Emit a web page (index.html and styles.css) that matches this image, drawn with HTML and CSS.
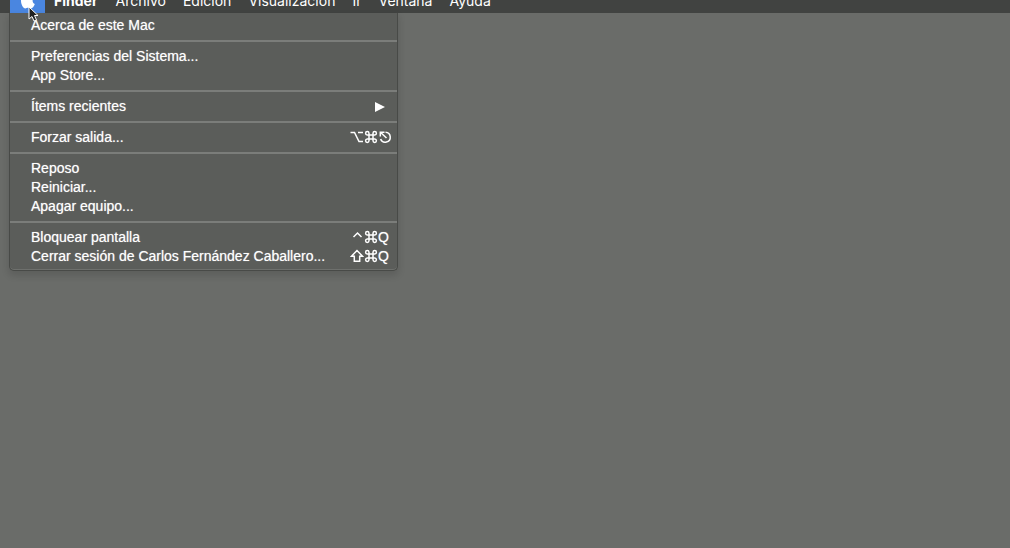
FILE: index.html
```html
<!DOCTYPE html>
<html lang="es">
<head>
<meta charset="utf-8">
<title>Finder</title>
<link rel="stylesheet" href="styles.css">
</head>
<body class="desktop">
<svg class="symbols" aria-hidden="true">
  <symbol id="cmd" viewBox="0 0 14 14"><path d="M5 5h4v4H5zM5 5H3.200A1.700 1.700 0 1 1 5 3.200zM9 5V3.200A1.700 1.700 0 1 1 10.800 5zM9 9h1.800A1.700 1.700 0 1 1 9 10.800zM5 9v1.800A1.700 1.700 0 1 1 3.200 9z"/></symbol>
  <symbol id="option" viewBox="0 0 14 14"><path d="M0.500 2.500H4.500l4.500 9H13M8 2.500H13"/></symbol>
  <symbol id="power" viewBox="0 0 14 14"><path d="M7.500 2.200A5 5 0 1 1 2.600 9M8.500 8L3 2.800M2.300 6.500V2.300H6.500"/></symbol>
  <symbol id="control" viewBox="0 0 14 14"><path d="M3.500 7L7.500 3l4 4"/></symbol>
  <symbol id="shift" viewBox="0 0 14 14"><path d="M7 1.500L1.500 7.200h2.800v5h5.400v-5h2.800z"/></symbol>
</svg>
<nav class="menubar" aria-label="Barra de menús">
  <button class="bar-item apple" aria-label="Apple"><svg class="apple-icon" viewBox="0 0 16 18"><path d="M11.200 4.500c-1.400 0-2.200.8-3.200.8s-2-.8-3.300-.8C2.600 4.500 1 6.500 1 9.700c0 3.700 2.200 7.800 4.300 7.800 1 0 1.600-.7 2.800-.7s1.700.7 2.800.7c1.700 0 3.300-2.600 3.900-4.500-1.400-.6-2.200-1.800-2.200-3.300 0-1.400.7-2.500 1.900-3.200-.8-1.300-2-2-3.300-2zM8 4.300C8 2 9.500.5 11.300.2 11.500 2.400 9.900 4.200 8 4.300z"/></svg></button>
  <button class="bar-item app-name">Finder</button>
  <button class="bar-item">Archivo</button>
  <button class="bar-item">Edición</button>
  <button class="bar-item">Visualización</button>
  <button class="bar-item">Ir</button>
  <button class="bar-item">Ventana</button>
  <button class="bar-item">Ayuda</button>
</nav>
<main class="workspace">
  <div class="menu" role="menu">
    <div class="group"><button class="item" role="menuitem">Acerca de este Mac</button></div>
    <div class="group">
      <button class="item" role="menuitem">Preferencias del Sistema...</button>
      <button class="item" role="menuitem">App Store...</button>
    </div>
    <div class="group"><button class="item" role="menuitem">Ítems recientes <svg class="arrow" viewBox="0 0 10 10"><path d="M0 0l10 5-10 5z"/></svg></button></div>
    <div class="group"><button class="item" role="menuitem">Forzar salida... <span class="keys wide"><svg class="key"><use href="#option"/></svg><svg class="key"><use href="#cmd"/></svg><svg class="key"><use href="#power"/></svg></span></button></div>
    <div class="group">
      <button class="item" role="menuitem">Reposo</button>
      <button class="item" role="menuitem">Reiniciar...</button>
      <button class="item" role="menuitem">Apagar equipo...</button>
    </div>
    <div class="group">
      <button class="item" role="menuitem">Bloquear pantalla <span class="keys"><svg class="key"><use href="#control"/></svg><svg class="key"><use href="#cmd"/></svg><span class="letter">Q</span></span></button>
      <button class="item" role="menuitem">Cerrar sesión de Carlos Fernández Caballero... <span class="keys"><svg class="key"><use href="#shift"/></svg><svg class="key"><use href="#cmd"/></svg><span class="letter">Q</span></span></button>
    </div>
  </div>
</main>
<svg class="cursor" viewBox="0 0 12 18" aria-hidden="true"><path d="M1 1v12l3-2.500 2 4.500 2.500-1-2-4.500H10z"/></svg>
</body>
</html>
```
FILE: styles.css
```css
* { box-sizing: border-box; }
.desktop {
  margin: 0;
  min-height: 100vh;
  background: #6a6c69;
  color: #fff;
  font: 400 14px/19px "Liberation Sans", Arial, sans-serif;
}
.symbols { display: none; }
.menubar {
  display: flex;
  align-items: flex-end;
  height: 13px;
  padding-left: 10px;
  overflow: hidden;
  background: #414341;
}
.bar-item {
  flex: none;
  height: 22px;
  padding: 0 8px 3px 9px;
  border: 0;
  background: none;
  color: inherit;
  font: 400 14px/19px Inter, "Liberation Sans", sans-serif;
}
.app-name { padding-right: 9px; font-weight: 700; }
.apple { width: 35px; padding: 0 9px 4px 10px; background: #4a86e0; }
.apple-icon { display: block; width: 16px; height: 18px; fill: #fff; }
.workspace { display: flex; padding-left: 9px; }
.menu {
  width: 389px;
  padding: 3px 0 4px;
  border: 1px solid #484a47;
  border-top: 0;
  border-radius: 0 0 5px 5px;
  background: #5b5d5a;
  box-shadow: 0 4px 7px 1px rgba(0, 0, 0, 0.12), inset 0 -1px #6e706d;
}
.group + .group {
  margin-top: 5px;
  padding-top: 5px;
  border-top: 2px solid #7b7d7a;
}
.item {
  display: flex;
  align-items: center;
  justify-content: space-between;
  width: 100%;
  height: 19px;
  padding: 0 8px 0 21px;
  border: 0;
  background: none;
  color: inherit;
  font: inherit;
  text-align: left;
  text-shadow: 0 0 1px rgba(255, 255, 255, 0.6);
  white-space: nowrap;
}
.keys { display: flex; align-items: center; }
.wide { margin-right: -3px; }
.key {
  width: 14px;
  height: 14px;
  margin-bottom: 1px;
  fill: none;
  stroke: #fff;
  stroke-width: 1.5;
}
.letter { width: 11px; text-align: center; }
.arrow { width: 10px; height: 10px; margin-right: 4px; fill: #fff; }
.cursor {
  position: absolute;
  top: 6px;
  left: 28px;
  width: 12px;
  height: 18px;
  fill: #222;
  stroke: #fff;
}
```
